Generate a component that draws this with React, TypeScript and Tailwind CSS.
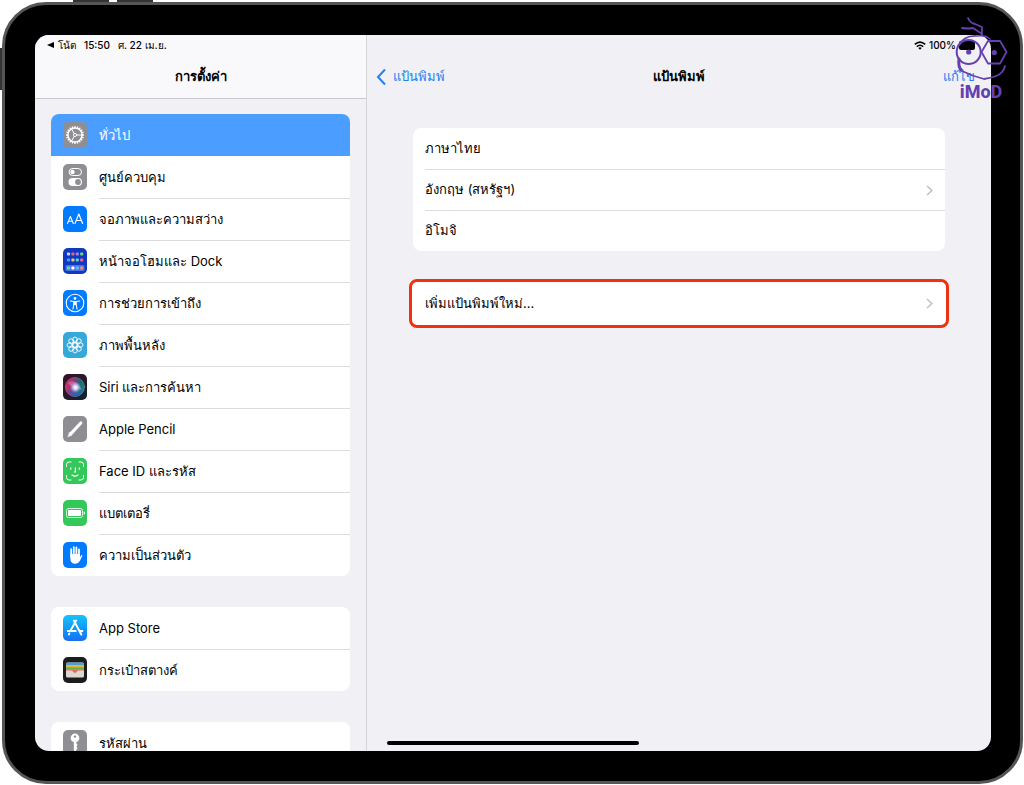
import React from "react"
import clsx from "clsx"

type SettingItem = {
  id: string
  label: string
  icon: React.ReactNode
}

type KeyboardItem = {
  id: string
  label: string
  hasDetail: boolean
}

/* === ICONS === */

type TileProps = {
  color: string
  children: React.ReactNode
}

// Rounded square that every settings icon sits on
const Tile: React.FC<TileProps> = ({ color, children }) => (
  <svg
    viewBox="0 0 24 26"
    className={clsx("h-[26px] w-6 shrink-0 rounded-[5px]", color)}
    fill="none"
    stroke="white"
    strokeLinecap="round"
    strokeLinejoin="round"
    aria-hidden="true"
  >
    {children}
  </svg>
)

const gearTeeth = Array.from({ length: 20 }, (_, i) => i * 18)
const petals = Array.from({ length: 8 }, (_, i) => i * 45)

const GeneralIcon = () => (
  <Tile color="bg-[#8e8e93]">
    {gearTeeth.map((angle) => (
      <path
        key={angle}
        d="M12 4v2"
        strokeWidth="1.3"
        strokeLinecap="butt"
        transform={`rotate(${angle} 12 13)`}
      />
    ))}
    <circle cx="12" cy="13" r="7" strokeWidth="1.4" />
    <circle cx="12" cy="13" r="1.6" strokeWidth="0.9" />
    <path d="M13.6 13H19M11.2 11.6L8.6 7M11.2 14.4L8.6 19" strokeWidth="1" />
  </Tile>
)

const ControlCenterIcon = () => (
  <Tile color="bg-[#8e8e93]">
    <rect x="6" y="4.5" width="12.5" height="7" rx="3.5" strokeWidth="1" />
    <circle cx="9.5" cy="8" r="2.2" fill="white" stroke="none" />
    <rect x="5.5" y="14" width="13.5" height="8" rx="4" fill="white" stroke="none" />
    <circle cx="15" cy="18" r="2.9" fill="#8e8e93" stroke="none" />
  </Tile>
)

const DisplayIcon = () => (
  <Tile color="bg-[#007aff]">
    <path d="M4.5 17.5L7.4 10.5L10.3 17.5M5.5 15.3H9.3" strokeWidth="1.1" />
    <path d="M12 17.5L15.8 8L19.6 17.5M13.3 14.5H18.3" strokeWidth="1.2" />
  </Tile>
)

const homeDots = [
  { x: 4, y: 4.5, fill: "#c4d4ff" },
  { x: 8.4, y: 4.5, fill: "#f0607c" },
  { x: 12.8, y: 4.5, fill: "#a97cf0" },
  { x: 17.2, y: 4.5, fill: "#6fdc7c" },
  { x: 4, y: 10.5, fill: "#3aa0ff" },
  { x: 8.4, y: 10.5, fill: "#f7c94b" },
  { x: 12.8, y: 10.5, fill: "#55d6c8" },
  { x: 17.2, y: 10.5, fill: "#f06a8a" },
  { x: 4, y: 18.5, fill: "#5fe08a" },
  { x: 8.4, y: 18.5, fill: "#ffffff" },
  { x: 12.8, y: 18.5, fill: "#6db6ff" },
  { x: 17.2, y: 18.5, fill: "#f28a7a" },
]

const HomeScreenIcon = () => (
  <Tile color="bg-[#1238c0]">
    <rect x="2.5" y="17" width="19" height="6" rx="1.5" fill="#4a74e4" stroke="none" />
    {homeDots.map((dot) => (
      <rect
        key={`${dot.x}-${dot.y}`}
        x={dot.x}
        y={dot.y}
        width="3"
        height="3"
        rx="0.8"
        fill={dot.fill}
        stroke="none"
      />
    ))}
  </Tile>
)

const AccessibilityIcon = () => (
  <Tile color="bg-[#007aff]">
    <circle cx="12" cy="13" r="8.8" strokeWidth="1.1" />
    <circle cx="12" cy="8.4" r="1.4" fill="white" stroke="none" />
    <path
      d="M7.3 11L10.8 11.5V14.5L10 19M16.7 11L13.2 11.5V14.5L14 19M10.8 11.5H13.2"
      strokeWidth="1.1"
    />
    <path d="M10.8 11.2H13.2V15H10.8Z" fill="white" stroke="none" />
  </Tile>
)

const WallpaperIcon = () => (
  <Tile color="bg-[#36a9db]">
    {petals.map((angle) => (
      <ellipse
        key={angle}
        cx="12"
        cy="7.8"
        rx="2.3"
        ry="2.8"
        strokeWidth="0.9"
        transform={`rotate(${angle} 12 13)`}
      />
    ))}
    <circle cx="12" cy="13" r="2.2" strokeWidth="0.9" />
    {petals.map((angle) => (
      <path
        key={angle}
        d="M12 10.8V9"
        strokeWidth="0.7"
        transform={`rotate(${angle} 12 13)`}
      />
    ))}
  </Tile>
)

const SiriIcon = () => (
  <Tile color="bg-linear-to-br from-[#3a0f24] to-[#0c2030]">
    <defs>
      <linearGradient id="siri-ring" x1="0" y1="0.2" x2="1" y2="0.4">
        <stop offset="0" stopColor="#e0245e" />
        <stop offset="0.45" stopColor="#8a3a78" />
        <stop offset="0.75" stopColor="#1d6a74" />
        <stop offset="1" stopColor="#0f8a7a" />
      </linearGradient>
      <radialGradient id="siri-glow">
        <stop offset="0" stopColor="#ffffff" />
        <stop offset="0.35" stopColor="#d6e8ff" stopOpacity="0.9" />
        <stop offset="1" stopColor="#5aa8ff" stopOpacity="0" />
      </radialGradient>
    </defs>
    <circle cx="12" cy="13" r="9.6" fill="url(#siri-ring)" stroke="#7c8fa8" strokeWidth="0.5" />
    <path d="M4 15C8 20 15 21 20 16C18 22 8 24 4 15Z" fill="#2a60d8" stroke="none" />
    <path d="M5 9C9 5 15 8 19 16C14 14 9 14 5 9Z" fill="#e86a9c" fillOpacity="0.7" stroke="none" />
    <circle cx="12.5" cy="13.5" r="6" fill="url(#siri-glow)" stroke="none" />
  </Tile>
)

const PencilIcon = () => (
  <Tile color="bg-[#8e8e93]">
    <path d="M8 17.6L17.8 7" strokeWidth="3.2" />
    <path d="M6.4 16.4L9 19.2L5 20.8Z" fill="white" strokeWidth="0.4" />
  </Tile>
)

const FaceIdIcon = () => (
  <Tile color="bg-[#34c759]">
    <path
      d="M3.5 8.5V6.5Q3.5 4 6 4H8M16 4H18Q20.5 4 20.5 6.5V8.5M20.5 17.5V19.5Q20.5 22 18 22H16M8 22H6Q3.5 22 3.5 19.5V17.5"
      strokeWidth="1"
    />
    <path d="M7.8 9.8V11.3M16.2 9.8V11.3M12.4 9.8V14H11.3M9 17Q12 19.4 15 17" strokeWidth="1.2" />
  </Tile>
)

const BatteryIcon = () => (
  <Tile color="bg-[#34c759]">
    <rect x="3.5" y="8.5" width="16" height="9" rx="2" strokeWidth="0.8" />
    <rect x="5" y="10" width="13" height="6" rx="0.8" fill="white" stroke="none" />
    <path d="M21.2 12V14" strokeWidth="1.1" />
  </Tile>
)

const PrivacyIcon = () => (
  <Tile color="bg-[#007aff]">
    <path d="M8.2 14V7.2M10.8 13V5.2M13.4 13V5.4M16 14V7.4" strokeWidth="1.8" />
    <path
      d="M7.3 12H16.9V15.5L18 13.4Q19.2 12.4 19.4 13.8L16.8 19Q15.4 21.8 12.2 21.8Q7.3 21.8 7.3 16Z"
      fill="white"
      stroke="none"
    />
  </Tile>
)

const AppStoreIcon = () => (
  <Tile color="bg-linear-to-b from-[#1ac3fb] to-[#1b6ef3]">
    <path d="M13.2 5.5L7.4 15.8M10.8 5.5L17.8 18.5M4.8 16H12.8M16.6 16H19.4" strokeWidth="1.9" />
    <path d="M6.4 18.4L5.8 19.5M17.8 18.5L18.4 19.6" strokeWidth="1.9" />
  </Tile>
)

const WalletIcon = () => (
  <Tile color="bg-[#1c1c1e]">
    <rect x="3" y="5.5" width="18" height="15" rx="1.5" fill="#dcd9d0" stroke="none" />
    <path d="M3 7Q3 5.5 4.5 5.5H19.5Q21 5.5 21 7V8H3Z" fill="#4f9fce" stroke="none" />
    <path d="M3 8H21V10.5H3Z" fill="#e0b83a" stroke="none" />
    <path d="M3 10.3H21V12.8H3Z" fill="#6fae4e" stroke="none" />
    <path
      d="M3 12.6H21V13.6H15.5Q14.5 13.6 14 14.6Q13.2 16 12 16Q10.8 16 10 14.6Q9.5 13.6 8.5 13.6H3Z"
      fill="#e8695c"
      stroke="none"
    />
  </Tile>
)

const PasswordsIcon = () => (
  <Tile color="bg-[#8e8e93]">
    <circle cx="12" cy="8" r="4.4" fill="white" stroke="none" />
    <circle cx="12" cy="6.6" r="1.2" fill="#8e8e93" stroke="none" />
    <path d="M10.8 11H13.4V13.5L14.6 15L13.4 16.5L14.6 18L12.2 22L10.8 20Z" fill="white" stroke="none" />
  </Tile>
)

const WifiIcon = () => (
  <svg viewBox="0 0 12 9" className="h-[9px] w-3" fill="none" stroke="black" aria-hidden="true">
    <path d="M0.8 3.4Q6 -1.3 11.2 3.4" strokeWidth="1.6" />
    <path d="M2.8 5.6Q6 2.8 9.2 5.6" strokeWidth="1.5" />
    <path d="M6 8.8L4.3 7Q6 5.6 7.7 7Z" fill="black" stroke="none" />
  </svg>
)

const Chevron = () => (
  <svg
    viewBox="0 0 7 11"
    className="h-[11px] w-[7px] shrink-0"
    fill="none"
    stroke="#bfbfc3"
    strokeWidth="1.5"
    aria-hidden="true"
  >
    <path d="M1 1L5.8 5.5L1 10" />
  </svg>
)

/* === DATA === */

const settingGroups: SettingItem[][] = [
  [
    { id: "general", label: "ทั่วไป", icon: <GeneralIcon /> },
    { id: "control", label: "ศูนย์ควบคุม", icon: <ControlCenterIcon /> },
    { id: "display", label: "จอภาพและความสว่าง", icon: <DisplayIcon /> },
    { id: "home", label: "หน้าจอโฮมและ Dock", icon: <HomeScreenIcon /> },
    { id: "accessibility", label: "การช่วยการเข้าถึง", icon: <AccessibilityIcon /> },
    { id: "wallpaper", label: "ภาพพื้นหลัง", icon: <WallpaperIcon /> },
    { id: "siri", label: "Siri และการค้นหา", icon: <SiriIcon /> },
    { id: "pencil", label: "Apple Pencil", icon: <PencilIcon /> },
    { id: "faceid", label: "Face ID และรหัส", icon: <FaceIdIcon /> },
    { id: "battery", label: "แบตเตอรี่", icon: <BatteryIcon /> },
    { id: "privacy", label: "ความเป็นส่วนตัว", icon: <PrivacyIcon /> },
  ],
  [
    { id: "appstore", label: "App Store", icon: <AppStoreIcon /> },
    { id: "wallet", label: "กระเป๋าสตางค์", icon: <WalletIcon /> },
  ],
  [{ id: "passwords", label: "รหัสผ่าน", icon: <PasswordsIcon /> }],
]

const keyboards: KeyboardItem[] = [
  { id: "th", label: "ภาษาไทย", hasDetail: false },
  { id: "en", label: "อังกฤษ (สหรัฐฯ)", hasDetail: true },
  { id: "emoji", label: "อิโมจิ", hasDetail: false },
]

/* === SIDEBAR === */

const Sidebar: React.FC<{ selected: string }> = ({ selected }) => (
  <aside className="flex w-[332px] shrink-0 flex-col overflow-hidden border-r border-[#d4d4d9]">
    <header className="h-16 shrink-0 border-b border-[#c9c9ce] bg-[#f9f9fb]">
      <div className="flex h-5 items-center gap-2 pl-3 text-[10px] font-medium">
        <button className="flex items-center gap-1">
          <svg viewBox="0 0 7 6" className="h-[6px] w-[7px]" aria-hidden="true">
            <path d="M0 3L7 0V6Z" />
          </svg>
          โน้ต
        </button>
        <span>15:50</span>
        <span>ศ. 22 เม.ย.</span>
      </div>
      <h1 className="flex h-11 items-center justify-center font-semibold">การตั้งค่า</h1>
    </header>
    <nav className="flex flex-col gap-[31px] px-4 pt-[15px]">
      {settingGroups.map((group) => (
        <ul key={group[0].id} className="overflow-hidden rounded-lg bg-white">
          {group.map((item, index) => {
            const isSelected = item.id === selected
            // no divider above the first row or right under the highlighted one
            const hasDivider = index > 0 && group[index - 1].id !== selected
            return (
              <li key={item.id}>
                <button
                  className={clsx(
                    "flex h-[42px] w-full items-center gap-3 pl-3 text-left",
                    isSelected && "bg-[#4b9eff] text-white"
                  )}
                >
                  {item.icon}
                  <span
                    className={clsx(
                      "flex h-full grow items-center border-t",
                      hasDivider ? "border-[#dcdcde]" : "border-transparent"
                    )}
                  >
                    {item.label}
                  </span>
                </button>
              </li>
            )
          })}
        </ul>
      ))}
    </nav>
  </aside>
)

/* === KEYBOARD PANEL === */

const KeyboardPanel = () => (
  <main className="flex min-w-0 grow flex-col">
    <div className="flex h-5 items-center justify-end gap-[3px] pr-4 text-[10px] font-medium">
      <WifiIcon />
      <span>100%</span>
      <span className="h-[9px] w-4 rounded-xs bg-black" />
    </div>
    <header className="grid h-11 grid-cols-3 items-center px-2">
      <button className="flex items-center gap-1.5 justify-self-start text-[#2480f0]">
        <svg
          viewBox="0 0 12 18"
          className="h-[18px] w-3"
          fill="none"
          stroke="currentColor"
          strokeWidth="2"
          aria-hidden="true"
        >
          <path d="M10 1.5L3 9L10 16.5" />
        </svg>
        แป้นพิมพ์
      </button>
      <h2 className="text-center font-semibold">แป้นพิมพ์</h2>
      <button className="justify-self-end pr-2 text-[#2480f0]">แก้ไข</button>
    </header>

    <section className="flex flex-col gap-7 px-[42px] pt-[29px]">
      <ul className="mx-1 rounded-lg bg-white">
        {keyboards.map((item, index) => (
          <li key={item.id} className="pl-3">
            <button
              className={clsx(
                "flex h-[41px] w-full items-center justify-between border-t pr-3 text-left",
                index === 0 ? "border-transparent" : "border-[#dcdcde]"
              )}
            >
              {item.label}
              {item.hasDetail && <Chevron />}
            </button>
          </li>
        ))}
      </ul>
      <button className="flex h-[49px] items-center justify-between rounded-lg border-3 border-[#f03010] bg-white px-[13px] text-left">
        เพิ่มแป้นพิมพ์ใหม่...
        <Chevron />
      </button>
    </section>

    {/* home indicator */}
    <div className="mt-auto mb-[6px] ml-5 h-1 w-[252px] rounded-full bg-black" />
  </main>
)

/* === WATERMARK === */

const Watermark = () => (
  <div className="absolute top-4 right-4 flex w-[54px] flex-col items-center text-[#6540b0]">
    <svg
      viewBox="0 0 54 66"
      className="h-[66px] w-full"
      fill="none"
      stroke="currentColor"
      strokeLinecap="round"
      strokeLinejoin="round"
      aria-hidden="true"
    >
      <path d="M14 2Q16 7 21 8L28 11V19M8 12Q14 13 19 12L28 18" strokeWidth="1.8" />
      <path d="M4 30Q10 19 23 20Q32 19 36 23" strokeWidth="1.6" />
      <circle cx="14.7" cy="36" r="12" strokeWidth="2" />
      <circle cx="14.7" cy="36" r="2.6" fill="currentColor" stroke="none" />
      <path d="M27.5 36L34 25H46L52.5 36L46 47.5H34Z" strokeWidth="1.8" />
      <circle cx="40.3" cy="36.5" r="2.6" fill="currentColor" stroke="none" />
      <path d="M5 43Q4 52 8 55Q18 60 30 63Q44 61 48 56Q50 54 51 50" strokeWidth="1.8" />
      <path d="M5 43Q4 50 7 54" strokeWidth="3" />
    </svg>
    <span className="font-['Roboto','Liberation_Sans',sans-serif] text-[18px] leading-5 font-extrabold">
      iMoD
    </span>
  </div>
)

const App = () => (
  <div className="relative flex h-screen flex-col overflow-hidden bg-white pt-[2px] pr-px pb-px pl-[2px] font-['Inter','Noto_Sans',sans-serif] text-[13px] text-black">
    {/* hardware buttons */}
    <span className="absolute top-0 left-[73px] h-1 w-9 bg-[#333]" />
    <span className="absolute top-0 left-[117px] h-1 w-9 bg-[#333]" />
    <span className="absolute top-12 left-0 h-[42px] w-1 bg-[#333]" />

    <div className="relative flex min-h-0 grow rounded-[44px] border-3 border-[#555] bg-black py-[30px] pr-[29px] pl-[30px]">
      <div className="flex min-w-0 grow overflow-hidden rounded-[14px] bg-[#f0f0f5]">
        <Sidebar selected="general" />
        <KeyboardPanel />
      </div>
    </div>
    <Watermark />
  </div>
)

export default App
